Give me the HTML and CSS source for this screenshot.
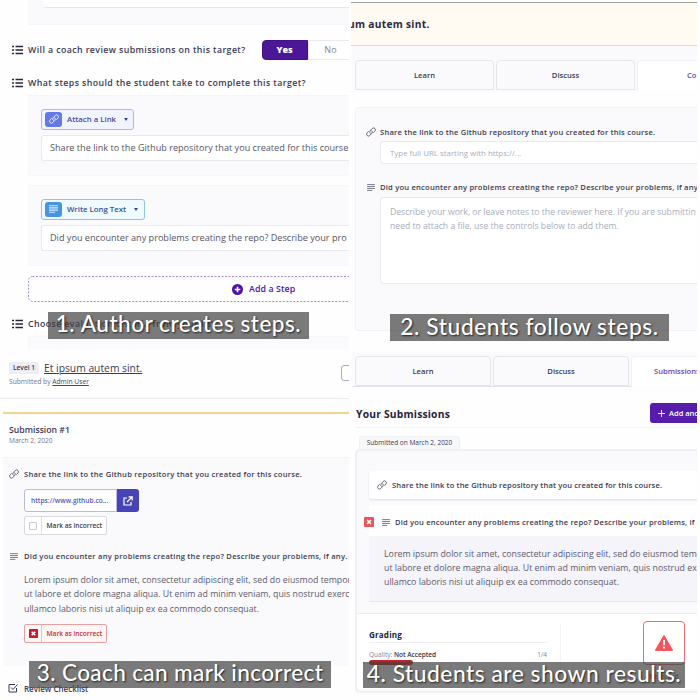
FILE: index.html
```
<!DOCTYPE html>
<html lang="en">
<head>
<meta charset="utf-8">
<title>Submission steps</title>
<link rel="stylesheet" href="styles.css">
</head>
<body>
<svg class="defs" aria-hidden="true">
  <symbol id="list" viewBox="0 0 11 10"><path d="M0 1.5h2M0 5h2M0 8.5h2M3.5 1.5H11M3.5 5H11M3.5 8.5H11" fill="none" stroke="currentColor" stroke-width="1.3"/></symbol>
  <symbol id="link" viewBox="0 0 16 16"><g fill="none" stroke="currentColor" stroke-width="1.4" stroke-linecap="round"><path d="M7 10.200A3 3 0 0 1 6.600 6l3.300-3.600a3 3 0 0 1 4.300 4.200l-2 2.100"/><path d="M9 5.800a3 3 0 0 1 .4 4.200l-3.300 3.600a3 3 0 0 1-4.300-4.200l2-2.100"/></g></symbol>
  <symbol id="lines" viewBox="0 0 9 8"><path d="M0 .7h9M0 2.900h9M0 5.100h9M0 7.300h6" fill="none" stroke="currentColor" stroke-width="1.100"/></symbol>
  <symbol id="cross" viewBox="0 0 10 10"><rect width="10" height="10" rx="1" fill="currentColor"/><path d="M3 3l4 4M7 3L3 7" stroke="#fff" stroke-width="1.700"/></symbol>
</svg>
<main class="board">

  <section class="panel author">
    <div class="block block-top"><div class="field-end"></div></div>
    <div class="question review">
      <svg class="ic-list"><use href="#list"/></svg><span>Will a coach review submissions on this target?</span>
      <div class="toggle"><b>Yes</b><i>No</i></div>
    </div>
    <div class="question steps"><svg class="ic-list"><use href="#list"/></svg><span>What steps should the student take to complete this target?</span></div>
    <div class="block step">
      <div class="chip chip-link"><span class="chip-ic"><svg><use href="#link"/></svg></span>Attach a Link<span class="caret"></span></div>
      <div class="input">Share the link to the Github repository that you created for this course</div>
    </div>
    <div class="block step second">
      <div class="chip chip-text"><span class="chip-ic"><svg class="small"><use href="#lines"/></svg></span>Write Long Text<span class="caret"></span></div>
      <div class="input">Did you encounter any problems creating the repo? Describe your pro</div>
    </div>
    <div class="add-step"><svg class="dash"><rect x=".5" y=".5" width="340" height="25" rx="4"/></svg><svg class="plus" viewBox="0 0 12 12"><circle cx="6" cy="6" r="6" fill="#4b12ae"/><path d="M6 3v6M3 6h6" stroke="#fff" stroke-width="1.800"/></svg>Add a Step</div>
    <div class="question choose"><svg class="ic-list"><use href="#list"/></svg><span>Choose evaluation criteria from your list</span></div>
    <div class="block block-last"></div>
    <div class="caption cap1">1. Author creates steps.</div>
  </section>

  <section class="panel student">
    <header class="banner"><span>um autem sint.</span></header>
    <nav class="tabs"><div class="tab">Learn</div><div class="tab">Discuss</div><div class="tab on">Co</div></nav>
    <div class="form">
      <div class="label"><svg class="ic-link"><use href="#link"/></svg><span>Share the link to the Github repository that you created for this course.</span></div>
      <div class="url">Type full URL starting with https://...</div>
      <div class="label second"><svg class="ic-lines"><use href="#lines"/></svg><span>Did you encounter any problems creating the repo? Describe your problems, if any</span></div>
      <div class="area">Describe your work, or leave notes to the reviewer here. If you are submittin<br>need to attach a file, use the controls below to add them.</div>
    </div>
    <div class="caption cap2">2. Students follow steps.</div>
  </section>

  <section class="panel coach">
    <header class="top">
      <div class="title"><span class="level">Level 1</span><u>Et ipsum autem sint.</u></div>
      <div class="by">Submitted by <u>Admin User</u></div>
      <div class="edge-button"></div>
    </header>
    <div class="sub-head"><div class="sub-name">Submission #1</div><div class="sub-date">March 2, 2020</div></div>
    <div class="answers">
      <div class="label"><svg class="ic-link"><use href="#link"/></svg><span>Share the link to the Github repository that you created for this course.</span></div>
      <div class="link-box"><span>https://www.github.co...</span><b><svg viewBox="0 0 10 10"><path d="M4 2H1v7h7V6M5.500 .8h3.700v3.700M9 1L4 6" fill="none" stroke="#fff" stroke-width="1.200"/></svg></b></div>
      <div class="mark"><span class="check"><i></i></span><span class="mark-text">Mark as incorrect</span></div>
      <div class="label second"><svg class="ic-lines"><use href="#lines"/></svg><span>Did you encounter any problems creating the repo? Describe your problems, if any.</span></div>
      <p class="lorem">Lorem ipsum dolor sit amet, consectetur adipiscing elit, sed do eiusmod tempor<br>ut labore et dolore magna aliqua. Ut enim ad minim veniam, quis nostrud exerc<br>ullamco laboris nisi ut aliquip ex ea commodo consequat.</p>
      <div class="mark bad"><span class="check"><svg><use href="#cross"/></svg></span><span class="mark-text">Mark as incorrect</span></div>
    </div>
    <div class="checklist"><svg viewBox="0 0 10 10"><path d="M8.500 5v4h-7.500V1.500h6M3 4.500l2 2L9.500 1.500" fill="none" stroke="currentColor" stroke-width="1"/></svg>Review Checklist</div>
    <div class="caption cap3">3. Coach can mark incorrect</div>
  </section>

  <section class="panel results">
    <nav class="tabs"><div class="tab">Learn</div><div class="tab">Discuss</div><div class="tab on">Submissions</div></nav>
    <div class="your"><h2>Your Submissions</h2><div class="add"><svg viewBox="0 0 8 8"><path d="M4 0v8M0 4h8" stroke="#fff" stroke-width="1"/></svg>Add ano</div></div>
    <div class="tag">Submitted on March 2, 2020</div>
    <div class="card">
      <div class="answer"><svg class="ic-link"><use href="#link"/></svg><span>Share the link to the Github repository that you created for this course.</span></div>
      <div class="wrong"><svg class="ic-cross"><use href="#cross"/></svg><svg class="ic-lines"><use href="#lines"/></svg><span>Did you encounter any problems creating the repo? Describe your problems, if a</span></div>
      <p class="lorem">Lorem ipsum dolor sit amet, consectetur adipiscing elit, sed do eiusmod tempo<br>ut labore et dolore magna aliqua. Ut enim ad minim veniam, quis nostrud exer<br>ullamco laboris nisi ut aliquip ex ea commodo consequat.</p>
      <div class="grading">
        <div class="grades">
          <h3>Grading</h3>
          <div class="quality"><span>Quality: <b>Not Accepted</b></span><span>1/4</span></div>
          <div class="bar"></div>
        </div>
        <div class="status">
          <div class="warn"><svg viewBox="0 0 18 16"><path d="M9 .8L17.200 15.200H.8z" fill="#f4565c" stroke="#f4565c" stroke-width="1.500" stroke-linejoin="round"/><path d="M9 5v5M9 11.500v2" stroke="#fff" stroke-width="2"/></svg></div>
          <div class="rejected">Rejected</div>
        </div>
      </div>
    </div>
    <div class="caption cap4">4. Students are shown results.</div>
  </section>
</main>
</body>
</html>
```
FILE: styles.css
```
* { box-sizing: border-box; }
body { margin: 0; background: #fefefe; font-family: "Open Sans", "Noto Sans", sans-serif; color: #3c3a52; white-space: nowrap; }
h2, h3, p { margin: 0; }
i { font-style: normal; }
svg { display: block; flex: none; }
.defs { position: absolute; width: 0; height: 0; }
.board { display: grid; grid-template-columns: 349px 346px; grid-template-rows: 349px 351px; column-gap: 2px; width: 700px; height: 700px; overflow: hidden; }
.panel { position: relative; display: flex; flex-direction: column; overflow: hidden; }
.ic-list { width: 11px; height: 10px; color: #27263a; }
.ic-link { width: 10px; height: 10px; color: #55536a; }
.ic-lines { width: 8px; height: 7px; color: #77758c; }

.caption { position: absolute; height: 27px; display: flex; align-items: center; justify-content: center; padding-bottom: 4px; background: rgba(66, 66, 66, .7); color: #fff; font-family: Lato, "Open Sans", sans-serif; font-weight: 500; text-shadow: 1px 1px 2px #222; }
.cap1 { left: 48px; top: 312px; width: 261px; font-size: 22.600px; letter-spacing: .5px; }
.cap2 { left: 39px; top: 314px; width: 279px; font-size: 22.800px; letter-spacing: .55px; }
.cap3 { left: 29px; top: 312px; width: 302px; font-size: 22.600px; letter-spacing: .35px; }
.cap4 { left: 12px; top: 313px; width: 322px; height: 26px; font-size: 22.800px; letter-spacing: .5px; }

/* author */
.block { flex: none; margin-left: 28px; background: #fafafc; border: 1px solid #f6f6f9; border-right: 0; }
.block-top { height: 25px; border-top: 0; padding-left: 14px; }
.field-end { height: 8px; background: #fff; border-bottom: 1px solid #e8e8ec; border-radius: 0 0 0 3px; }
.question { display: flex; align-items: center; gap: 5px; padding-left: 12px; font-size: 8.800px; font-weight: 600; letter-spacing: .4px; height: 20px; flex: none; }
.review { margin-top: 15px; }
.toggle { flex: none; display: flex; width: 92px; height: 20px; margin-left: 11px; font-size: 9px; line-height: 18px; text-align: center; letter-spacing: 0; }
.toggle b { width: 46px; background: #4b1796; color: #fff; border-radius: 4px 0 0 4px; border: 1px solid #421285; }
.toggle i { width: 46px; background: #fff; color: #85839a; border: 1px solid #e9e9ed; font-weight: 500; letter-spacing: .3px; }
.steps { margin-top: 13px; }
.step { height: 81px; margin-top: 2px; padding: 12.500px 0 0 12px; }
.step.second { margin-top: 9px; }
.chip { display: flex; align-items: center; width: 93px; height: 21px; padding-left: 3px; border: 1px solid #a9b9f0; border-radius: 3px; background: #eff4ff; color: #4d47a0; font-size: 7.800px; font-weight: 600; }
.chip-text { width: 104px; border-color: #8ec4e4; background: #effaff; color: #355291; }
.chip-ic { width: 17px; height: 15px; margin-right: 5px; border-radius: 3px; background: #6279e7; color: #fff; display: flex; align-items: center; justify-content: center; }
.chip-ic svg { width: 10px; height: 10px; }
.chip-ic svg.small { width: 9px; height: 8px; color: #d8edff; }
.chip-text .chip-ic { background: #4595e2; }
.caret { margin-left: 8px; border: 2px solid transparent; border-top: 3px solid #3f3c92; border-bottom: 0; }
.input { height: 26px; margin-top: 5px; padding-left: 8px; background: #fff; border: 1px solid #e9e9ed; border-right: 0; border-radius: 3px 0 0 3px; font-size: 9.120px; line-height: 24px; color: #55545f; overflow: hidden; }
.add-step { position: relative; flex: none; display: flex; align-items: center; gap: 6px; height: 26px; margin: 10px 0 0 28px; padding-left: 204px; color: #4b12ae; font-size: 8.800px; font-weight: 600; letter-spacing: .1px; }
.dash { position: absolute; left: 0; top: 0; width: 321px; height: 26px; }
.dash rect { fill: none; stroke: #a58cc8; stroke-dasharray: 2 1.500; }
.plus { width: 11px; height: 11px; }
.choose { margin-top: 12px; }
.block-last { height: 14px; margin-top: 2px; }

/* student */
.banner { flex: none; height: 44px; margin-top: 2px; border-top: 1px solid #9fa29b; border-bottom: 1px solid #e6dcae; background: #fffaf2; font-size: 10.200px; font-weight: 700; letter-spacing: .3px; line-height: 42px; color: #2c2a3c; overflow: hidden; }
.banner span { display: block; margin-left: -3px; }
.tabs { flex: none; display: flex; gap: 2px; height: 45px; margin-left: 1px; padding: 14px 0 0 3px; background: #fafafc; }
.tab { flex: none; width: 139px; height: 30px; border: 1px solid #e5e5eb; border-radius: 4px 4px 0 0; background: #fafafd; text-align: center; font-size: 7.600px; font-weight: 600; line-height: 29px; }
.tab.on { height: 31px; background: #fff; border-color: #f1f1f5; border-bottom: 0; color: #673eb7; }
.student .tab.on { text-align: left; text-indent: 49px; }
.form { flex: none; height: 224px; margin: 16px 0 0 4px; padding: 17px 0 0 10px; border: 1px solid #f2f2f6; border-right: 0; border-radius: 4px 0 0 4px; background: #fafafc; }
.label { display: flex; align-items: center; gap: 5px; height: 14px; font-size: 7.600px; font-weight: 600; letter-spacing: .2px; }
.label .ic-lines { margin: 0 1px; }
.student .label { gap: 4px; }
.student .label.second { margin-top: 16px; }
.url, .area { margin-left: 14px; padding-left: 9px; background: #fff; border: 1px solid #ebebef; border-right: 0; border-radius: 4px 0 0 4px; color: #a9adbb; overflow: hidden; }
.url { height: 23px; margin-top: 2px; font-size: 7.900px; line-height: 22px; }
.area { height: 87px; margin-top: 3px; padding-top: 8px; font-size: 8.650px; line-height: 13.500px; }

/* coach */
.top { position: relative; flex: none; height: 50px; padding: 11px 0 0 9px; border-bottom: 1px solid #ececf0; }
.title { display: flex; align-items: center; gap: 5px; height: 15px; font-size: 10.300px; font-weight: 500; }
.title u, .by u { text-underline-offset: 1px; text-decoration-thickness: 1px; }
.level { width: 30px; height: 12px; margin-top: 1px; background: #eeedf5; border-radius: 2px; font-size: 6.600px; font-weight: 600; line-height: 12px; text-align: center; }
.by { font-size: 6.700px; line-height: 13px; color: #77758a; }
.by u { color: #4b495f; }
.edge-button { position: absolute; left: 341px; top: 16px; width: 20px; height: 16px; border: 1px solid #a9a8d4; border-radius: 3px; }
.sub-head { flex: none; height: 45px; margin: 13px 0 0 3px; padding: 10px 0 0 6px; border-top: 2px solid #f2d391; }
.sub-name { font-size: 8.700px; font-weight: 600; line-height: 12px; }
.sub-date { font-size: 6.600px; line-height: 9px; color: #77758a; }
.answers { flex: none; height: 209px; margin-left: 3px; padding: 9px 0 0 6px; background: #fafafc; border-top: 1px solid #f3f3f6; }
.link-box { display: flex; width: 115px; height: 23px; margin: 8px 0 0 15px; font-size: 6.650px; font-weight: 600; color: #5a55b8; }
.link-box span { width: 93px; padding-left: 6px; line-height: 22px; background: #fff; border: 1px solid #b9b8df; border-radius: 3px 0 0 3px; }
.link-box b { width: 22px; display: flex; align-items: center; justify-content: center; background: #4744b8; border-radius: 0 3px 3px 0; }
.link-box svg { width: 10px; height: 10px; }
.coach .label { letter-spacing: .24px; }
.mark { display: flex; width: 83px; height: 19px; margin: 4px 0 0 15px; background: #fff; border: 1px solid #d8d8de; border-radius: 2px; font-size: 6.600px; font-weight: 600; line-height: 17px; }
.check { width: 17px; display: flex; align-items: center; justify-content: center; border-right: 1px solid #dedee4; }
.check i { width: 8px; height: 8px; border: 1px solid #c9c9cf; border-radius: 1px; }
.check svg { width: 9px; height: 9px; color: #c31d2a; }
.mark-text { padding-left: 4.500px; }
.coach .label.second { margin-top: 14px; }
.lorem { color: #5d5b6d; font-size: 8.800px; line-height: 14.300px; }
.coach .lorem { margin: 10px 0 0 15px; }
.bad { margin-top: 8px; background: #fff5f4; border-color: #e7a0a1; color: #be3040; }
.bad .check { border-color: #edc0c0; }
.checklist { flex: none; display: flex; align-items: center; gap: 6px; height: 16px; margin-top: 14px; padding-left: 8px; font-size: 8px; font-weight: 600; }
.checklist svg { width: 10px; height: 10px; }

/* results */
.results .tabs { height: 35px; margin-top: 3px; padding-top: 4px; gap: 2px; border-bottom: 1px solid #e3e3e9; }
.results .tab { width: 136px; }
.results .tab.on { text-align: left; text-indent: 22px; }
.your { flex: none; display: flex; justify-content: space-between; height: 25px; margin: 16px 0 0 5px; border-bottom: 1px solid #f2f2f5; }
.your h2 { font-size: 10.300px; letter-spacing: .2px; line-height: 23px; color: #25233a; }
.add { flex: none; display: flex; align-items: center; gap: 4px; width: 47px; height: 20px; padding-left: 8px; overflow: hidden; background: #561cab; border-radius: 3px 0 0 3px; color: #fff; font-size: 7.500px; font-weight: 600; }
.add svg { width: 7px; height: 7px; }
.tag { flex: none; width: 101px; height: 13px; margin: 8px 0 0 8px; background: #f8f8fb; border: 1px solid #f2f2f6; border-bottom: 0; border-radius: 3px 3px 0 0; text-align: center; font-size: 6.500px; font-weight: 500; line-height: 12px; }
.card { flex: none; height: 244px; margin-left: 4px; border: 2px solid #f0f0f4; border-right: 0; border-radius: 5px 0 0 5px; background: #fafafc; }
.answer { display: flex; align-items: center; gap: 5px; height: 28px; margin: 20px 0 0 12px; padding-left: 8px; background: #fff; border-radius: 3px 0 0 3px; box-shadow: 0 1px 2px #dcdce2; font-size: 7.600px; font-weight: 600; letter-spacing: .13px; }
.wrong { display: flex; align-items: center; height: 31px; margin: 6px 0 0 7px; padding-top: 3px; font-size: 7.600px; font-weight: 600; letter-spacing: .17px; background: linear-gradient(90deg, transparent 5px, #fefefe 5px); overflow: hidden; }
.ic-cross { width: 10px; height: 10px; color: #ea5358; }
.wrong .ic-lines { margin: 0 5px 0 8px; }
.card .lorem { height: 66px; margin-left: 12px; padding: 11px 0 0 15px; background: #f5f4fa; border-bottom: 1px solid #e6e6ee; overflow: hidden; line-height: 14px; }
.grading { display: flex; height: 76px; margin-top: 11px; padding: 10px 0 0 12px; background: #fff; border-top: 1px solid #ececf2; }
.grades { width: 192px; padding-right: 13px; height: 52px; border-right: 1px solid #f3f3f6; }
.grades h3 { height: 19px; font-size: 8.100px; letter-spacing: .15px; line-height: 22px; border-bottom: 1px solid #f0f0f3; color: #28263c; }
.quality { display: flex; justify-content: space-between; font-size: 6.500px; line-height: 9px; margin-top: 7px; color: #85849a; }
.quality b { font-weight: 600; color: #34324a; }
.bar { width: 44px; height: 5px; margin-top: 1px; background: #c02027; border-radius: 3px; }
.status { margin: -3px 0 0 82px; width: 42px; text-align: center; }
.warn { height: 44px; display: flex; align-items: center; justify-content: center; border: 1px solid #ee6d72; border-radius: 4px; }
.warn svg { width: 18px; height: 16px; }
.rejected { font-size: 7px; font-weight: 600; line-height: 14px; margin-top: 5px; color: #d8434a; }
```
